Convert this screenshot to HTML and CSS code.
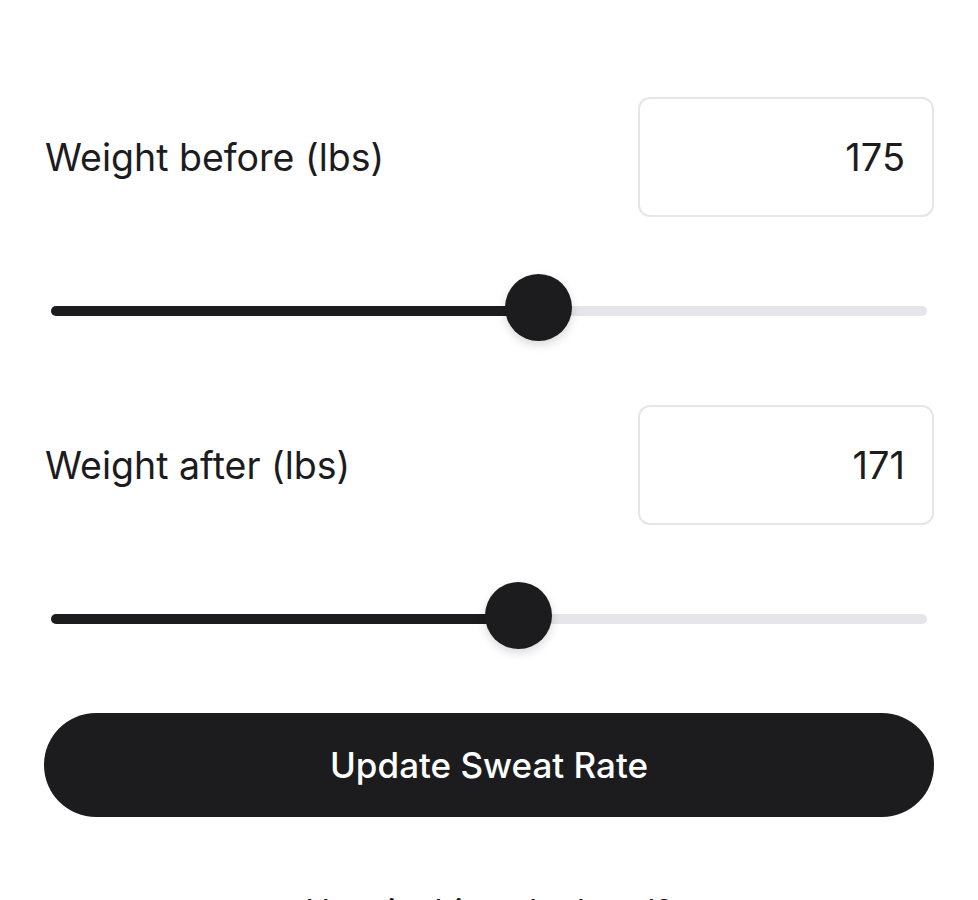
FILE: index.html
```html
<!DOCTYPE html>
<html lang="en">
<head>
  <meta charset="UTF-8">
  <meta name="viewport" content="width=device-width, initial-scale=1.0">
  <title>Sweat Rate</title>
  <link rel="stylesheet" href="styles.css">
</head>
<body>

  <main class="page">
    <div class="field-row">
      <label class="field-label" for="before">Weight before (lbs)</label>
      <input class="field-input" type="text" id="before" value="175">
    </div>
    <div class="slider">
      <div class="slider-track">
        <div class="slider-fill" style="width: 55.6%"></div>
        <div class="slider-thumb" style="left: 55.6%"></div>
      </div>
    </div>

    <div class="field-row">
      <label class="field-label" for="after">Weight after (lbs)</label>
      <input class="field-input" type="text" id="after" value="171">
    </div>
    <div class="slider">
      <div class="slider-track">
        <div class="slider-fill" style="width: 53.3%"></div>
        <div class="slider-thumb" style="left: 53.3%"></div>
      </div>
    </div>

    <button class="primary-btn">Update Sweat Rate</button>

    <p class="footnote">How is this calculated?</p>
  </main>

</body>
</html>
```

FILE: styles.css
```css
body {
  margin: 0;
  background-color: #fff;
  font-family: 'Inter', 'Liberation Sans', sans-serif;
  color: #1c1c1e;
  overflow: hidden;
}

.page {
  padding: 97px 44px 0 44px;
}

.field-row {
  display: flex;
  align-items: center;
  justify-content: space-between;
  height: 120px;
}

.field-label {
  font-size: 37.5px;
  padding-left: 1px;
}

.field-input {
  width: 296px;
  height: 120px;
  box-sizing: border-box;
  border: 2px solid #e5e5ea;
  border-radius: 12px;
  padding: 0 27px 0 16px;
  font-family: inherit;
  font-size: 38px;
  color: #1c1c1e;
  text-align: right;
  outline: none;
}

.slider {
  height: 188px;
  display: flex;
  align-items: center;
  padding: 0 7px;
}

.slider-track {
  position: relative;
  flex: 1;
  height: 10px;
  border-radius: 5px;
  background-color: #e5e5ea;
}

.slider-fill {
  height: 100%;
  border-radius: 5px;
  background-color: #1c1c1e;
}

.slider-thumb {
  position: absolute;
  top: 50%;
  width: 67px;
  height: 67px;
  margin: -37px 0 0 -33px;
  border-radius: 50%;
  background-color: #1c1c1e;
  box-shadow: 0 4px 10px rgba(0, 0, 0, 0.15);
}

.primary-btn {
  display: block;
  width: 100%;
  height: 104px;
  border: none;
  border-radius: 52px;
  background-color: #1c1c1e;
  color: #fff;
  font-family: inherit;
  font-size: 35px;
  font-weight: 500;
  cursor: pointer;
}

.footnote {
  margin: 74px 0 0 0;
  text-align: center;
  font-size: 34px;
  color: #1c1c1e;
}
```
